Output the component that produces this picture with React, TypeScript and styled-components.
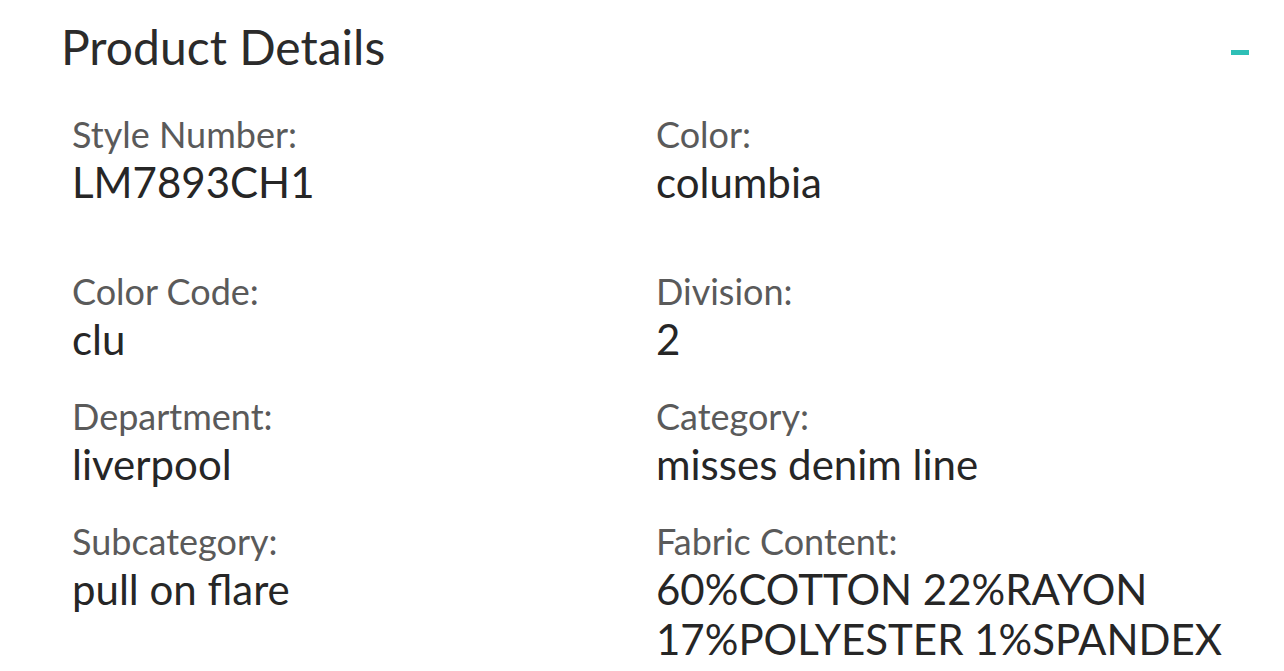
import styled, { createGlobalStyle } from 'styled-components';

const GlobalStyle = createGlobalStyle`
	html, body {
		margin: 0;
		padding: 0;
		background: #ffffff;
		font-family: Lato, "Open Sans", sans-serif;
	}
`;

const Panel = styled.section`
	width: 1284px;
	height: 671px;
	overflow: hidden;
	box-sizing: border-box;
	padding: 0 35px 0 61px;
`;

const Header = styled.header`
	display: flex;
	align-items: flex-start;
	justify-content: space-between;
	box-sizing: border-box;
	height: 111px;
	padding-top: 19px;
`;

const Title = styled.h2`
	margin: 0;
	font-size: 48px;
	line-height: 56px;
	font-weight: 400;
	color: #2b2b2b;
`;

const Toggle = styled.button`
	width: 18px;
	height: 5px;
	padding: 0;
	border: none;
	background: #2ebfb6;
	cursor: pointer;
	margin-top: 31px;
`;

const Grid = styled.div`
	display: grid;
	grid-template-columns: 584px 1fr;
	padding-left: 11px;
	row-gap: 29px;
`;

const Field = styled.div<{ $tall?: boolean }>`
	display: flex;
	flex-direction: column;
	min-height: ${p => (p.$tall ? '128px' : '96px')};
`;

const Label = styled.span`
	font-size: 36px;
	line-height: 46px;
	color: #5a5a5a;
`;

const Value = styled.span`
	font-size: 42px;
	line-height: 50px;
	color: #262626;
`;

const details = [
	['Style Number:', 'LM7893CH1'],
	['Color:', 'columbia'],
	['Color Code:', 'clu'],
	['Division:', '2'],
	['Department:', 'liverpool'],
	['Category:', 'misses denim line'],
	['Subcategory:', 'pull on flare'],
	['Fabric Content:', '60%COTTON 22%RAYON 17%POLYESTER 1%SPANDEX'],
];

export default function App() {
	return (
		<>
			<GlobalStyle />
			<Panel>
				<Header>
					<Title>Product Details</Title>
					<Toggle aria-label="collapse" />
				</Header>
				<Grid>
					{details.map(([label, value], i) => (
						<Field key={label} $tall={i < 2}>
							<Label>{label}</Label>
							<Value>{value}</Value>
						</Field>
					))}
				</Grid>
			</Panel>
		</>
	);
}
